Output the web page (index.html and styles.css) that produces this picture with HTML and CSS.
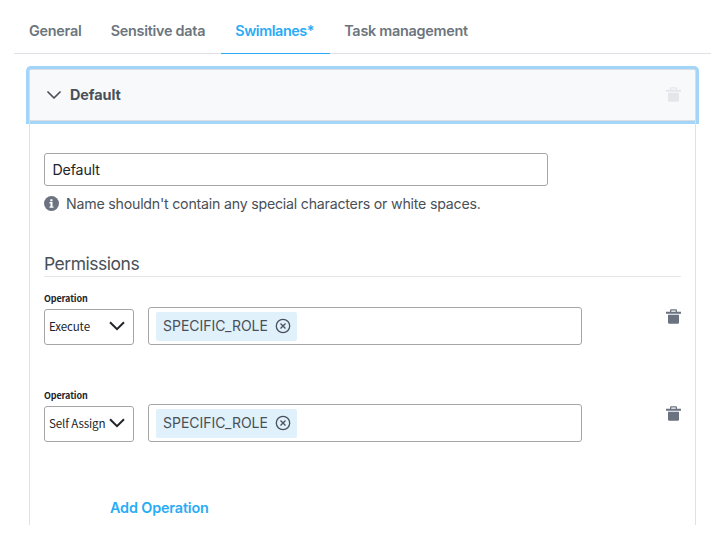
FILE: index.html
```html
<!DOCTYPE html>
<html lang="en">
<head>
<meta charset="utf-8">
<title>Swimlanes</title>
<link rel="stylesheet" href="styles.css">
</head>
<body>
<svg class="sprite" aria-hidden="true">
  <symbol id="trash" viewBox="0 0 15 15">
    <path d="M4 2.800V1.400Q4 .3 5.100 .3H9.900Q11 .3 11 1.400V2.800H15V4.700H0V2.800ZM5.300 2.800H9.700V1.600H5.300Z" fill-rule="evenodd"/>
    <path d="M2 5.700H13V13.500Q13 14.800 11.700 14.800H3.300Q2 14.800 2 13.500Z"/>
  </symbol>
  <symbol id="remove" viewBox="0 0 16 16">
    <circle cx="8" cy="8" r="6.700"/>
    <path d="M5.500 5.500L10.500 10.500M10.500 5.500L5.500 10.500"/>
  </symbol>
</svg>
<nav class="tabs">
  <a class="tab">General</a>
  <a class="tab">Sensitive data</a>
  <a class="tab active">Swimlanes*</a>
  <a class="tab">Task management</a>
</nav>
<section class="card">
  <header class="card-header">
    <svg class="toggle" viewBox="0 0 14 8"><path d="M1 1L7 7L13 1"/></svg>
    <h2>Default</h2>
    <svg class="trash disabled"><use href="#trash"/></svg>
  </header>
  <div class="card-body">
    <div class="name-field">Default</div>
    <p class="hint">
      <svg class="info" viewBox="0 0 15 15"><circle cx="7.500" cy="7.500" r="7.500"/><path d="M6.300 3.200H8.500V5.200H6.300ZM5.500 6.100H8.500V10.400H9.500V11.800H5.500V10.400H6.500V7.500H5.500Z"/></svg>
      <span>Name shouldn't contain any special characters or white spaces.</span>
    </p>
    <h3>Permissions</h3>
    <div class="operation">
      <div class="select-group">
        <label>Operation</label>
        <div class="select"><span>Execute</span><svg viewBox="0 0 16 10"><path d="M1 1.200L8 8.200L15 1.200"/></svg></div>
      </div>
      <div class="roles"><div class="tag"><span>SPECIFIC_ROLE</span><svg><use href="#remove"/></svg></div></div>
      <svg class="trash"><use href="#trash"/></svg>
    </div>
    <div class="operation">
      <div class="select-group">
        <label>Operation</label>
        <div class="select"><span>Self Assign</span><svg viewBox="0 0 16 10"><path d="M1 1.200L8 8.200L15 1.200"/></svg></div>
      </div>
      <div class="roles"><div class="tag"><span>SPECIFIC_ROLE</span><svg><use href="#remove"/></svg></div></div>
      <svg class="trash"><use href="#trash"/></svg>
    </div>
    <a class="add">Add Operation</a>
  </div>
</section>
</body>
</html>
```

FILE: styles.css
```css
* { box-sizing: border-box; }
body {
  margin: 0;
  height: 540px;
  overflow: hidden;
  background: #fff;
  color: #495057;
  font: 15px/20px Inter, "Liberation Sans", sans-serif;
}
h2, h3, p { margin: 0; }
svg { display: block; flex: none; }
.sprite { position: absolute; width: 0; height: 0; }
.tabs {
  display: flex;
  height: 54px;
  margin: 0 6px 0 14px;
  border-bottom: 1px solid #dee2e6;
}
.tab {
  height: 54px;
  padding: 21px 15px 0;
  border-bottom: 1px solid transparent;
  color: #6c757d;
  font-size: 14.400px;
  font-weight: 600;
  letter-spacing: -.26px;
}
.tab + .tab { padding: 21px 15.700px 0 14.300px; }
.tab.active { color: #29abf5; border-color: #29abf5; letter-spacing: -.42px; }
.card {
  width: 667px;
  height: 456px;
  margin: 15px 0 0 29px;
}
.card-header {
  display: flex;
  align-items: center;
  height: 52px;
  padding: 0 14px 0 16.500px;
  border: 1px solid #d9dee3;
  border-radius: 2px 2px 0 0;
  background: #f8f9fb;
  box-shadow: 0 0 0 3px #a3d5f9;
}
.toggle {
  width: 14px;
  height: 8px;
  fill: none;
  stroke: #495057;
  stroke-width: 1.700;
  stroke-linecap: round;
  stroke-linejoin: round;
}
.card-header h2 {
  flex: 1;
  margin-left: 9.500px;
  font-size: 14.400px;
  line-height: 20px;
  font-weight: 700;
  letter-spacing: -.05px;
}
.trash { width: 15px; height: 15px; fill: #6b7280; }
.trash.disabled { margin-bottom: 1px; fill: #e4e6ea; }
.card-body {
  height: 404px;
  padding: 32px 14px 0;
  border: solid #dee2e6;
  border-width: 0 1px;
}
.name-field {
  width: 504px;
  height: 33px;
  padding: 6px 7.500px;
  border: 1px solid #a6a6a6;
  border-radius: 3px;
  color: #212529;
  font-size: 14.200px;
  letter-spacing: -.15px;
}
.hint {
  display: flex;
  align-items: center;
  gap: 7px;
  margin-top: 8px;
  font-size: 14.200px;
  letter-spacing: -.22px;
}
.info { width: 15px; height: 15px; margin-bottom: 1px; fill: #6b7280; }
.info path { fill: #fff; }
h3 {
  height: 26px;
  margin-top: 37px;
  border-bottom: 1px solid #e5e7ea;
  font-size: 17.500px;
  line-height: 26px;
  font-weight: 400;
  letter-spacing: -.48px;
}
.operation {
  display: flex;
  align-items: flex-start;
  height: 97px;
  padding-top: 14px;
}
.select-group { width: 90px; font-family: "Noto Sans CJK SC", sans-serif; color: #212529; }
label {
  display: block;
  height: 18px;
  font-size: 9px;
  line-height: 15px;
  font-weight: 700;
  letter-spacing: -.12px;
}
.select {
  display: flex;
  align-items: center;
  justify-content: space-between;
  height: 36px;
  padding: 0 8px 2px 4px;
  border: 1px solid #a6a6a6;
  border-radius: 3px;
  font-size: 11.600px;
  letter-spacing: -.15px;
  white-space: nowrap;
}
.select span { margin-bottom: 1px; }
.select svg { width: 16px; height: 10px; fill: none; stroke: #212529; stroke-width: 2; }
.roles {
  width: 434px;
  height: 38px;
  margin: 16px 84px 0 14px;
  padding: 4px 7px;
  border: 1px solid #a6a6a6;
  border-radius: 3px;
}
.tag {
  display: flex;
  align-items: center;
  justify-content: space-between;
  width: 141px;
  height: 29px;
  padding: 0 6px 1px 7px;
  border-radius: 2px;
  background: #e0f1fc;
  font-size: 14px;
}
.tag svg { width: 16px; height: 16px; fill: none; stroke: #495057; stroke-width: 1.300; }
.operation .trash { margin-top: 18px; }
.add {
  display: block;
  margin: 27px 0 0 66px;
  color: #29abf5;
  font-size: 14.400px;
  font-weight: 600;
  letter-spacing: -.15px;
}
```
